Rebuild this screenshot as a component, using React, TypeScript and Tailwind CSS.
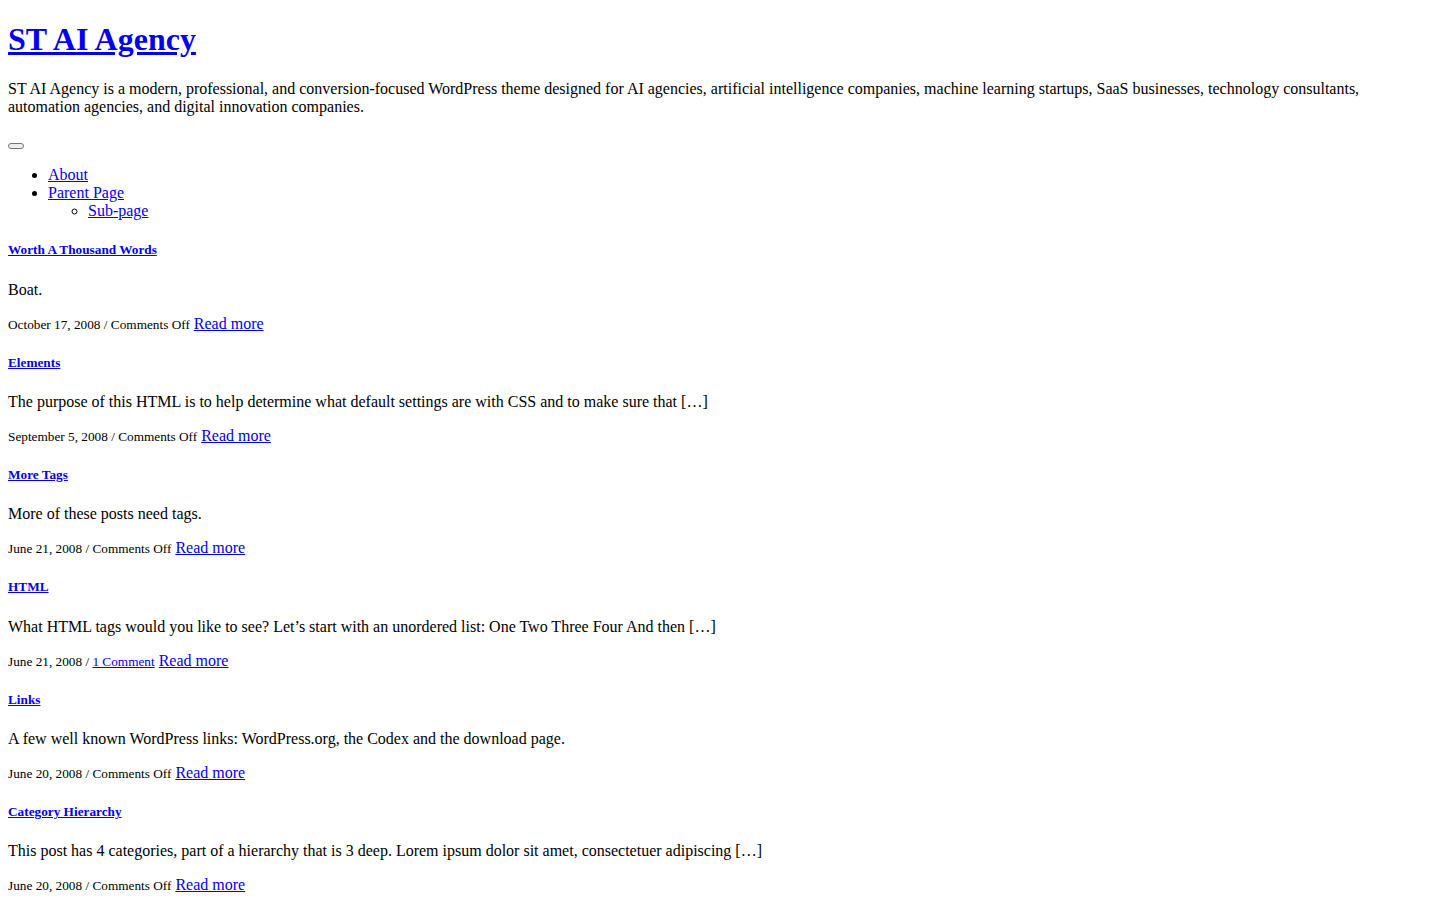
const posts = [
  {
    title: "Worth A Thousand Words",
    excerpt: "Boat.",
    date: "October 17, 2008",
    comments: null as string | null,
  },
  {
    title: "Elements",
    excerpt:
      "The purpose of this HTML is to help determine what default settings are with CSS and to make sure that […]",
    date: "September 5, 2008",
    comments: null,
  },
  {
    title: "More Tags",
    excerpt: "More of these posts need tags.",
    date: "June 21, 2008",
    comments: null,
  },
  {
    title: "HTML",
    excerpt:
      "What HTML tags would you like to see? Let’s start with an unordered list: One Two Three Four And then […]",
    date: "June 21, 2008",
    comments: "1 Comment",
  },
  {
    title: "Links",
    excerpt: "A few well known WordPress links: WordPress.org, the Codex and the download page.",
    date: "June 20, 2008",
    comments: null,
  },
  {
    title: "Category Hierarchy",
    excerpt:
      "This post has 4 categories, part of a hierarchy that is 3 deep. Lorem ipsum dolor sit amet, consectetuer adipiscing […]",
    date: "June 20, 2008",
    comments: null,
  },
];

const link = "text-[#0000ee] underline";

export default function App() {
  return (
    <div className="px-2 pb-4 font-['Liberation_Serif','Times_New_Roman',serif] text-base leading-[normal] text-black bg-white min-h-screen">
      <header>
        <h1 className="pt-[21.44px] text-[32px] font-bold leading-[normal]">
          <a href="#" className={link}>
            ST AI Agency
          </a>
        </h1>
        <p className="mt-[21.44px]">
          ST AI Agency is a modern, professional, and conversion-focused WordPress theme designed for AI agencies,
          artificial intelligence companies, machine learning startups, SaaS businesses, technology consultants,
          automation agencies, and digital innovation companies.
        </p>
        <nav>
          <button
            type="button"
            aria-label="Menu"
            className="block mt-[27.3px] w-4 h-[6px] rounded-[3px] border border-[#767676] bg-[#efefef]"
          />
          <ul className="mt-[17px] pl-10 list-disc">
            <li>
              <a href="#" className={link}>
                About
              </a>
            </li>
            <li>
              <a href="#" className={link}>
                Parent Page
              </a>
              <ul className="pl-10 list-[circle]">
                <li>
                  <a href="#" className={link}>
                    Sub-page
                  </a>
                </li>
              </ul>
            </li>
          </ul>
        </nav>
      </header>

      <main>
        {posts.map((post) => (
          <article key={post.title}>
            <h5 className="mt-[22.18px] text-[13.28px] font-bold leading-[normal]">
              <a href="#" className={link}>
                {post.title}
              </a>
            </h5>
            <p className="mt-[22.18px]">{post.excerpt}</p>
            <p className="mt-4">
              <span className="text-[13.28px]">
                {post.date} /{" "}
                {post.comments ? (
                  <a href="#" className={link}>
                    {post.comments}
                  </a>
                ) : (
                  "Comments Off"
                )}
              </span>{" "}
              <a href="#" className={link}>
                Read more
              </a>
            </p>
          </article>
        ))}
      </main>
    </div>
  );
}
